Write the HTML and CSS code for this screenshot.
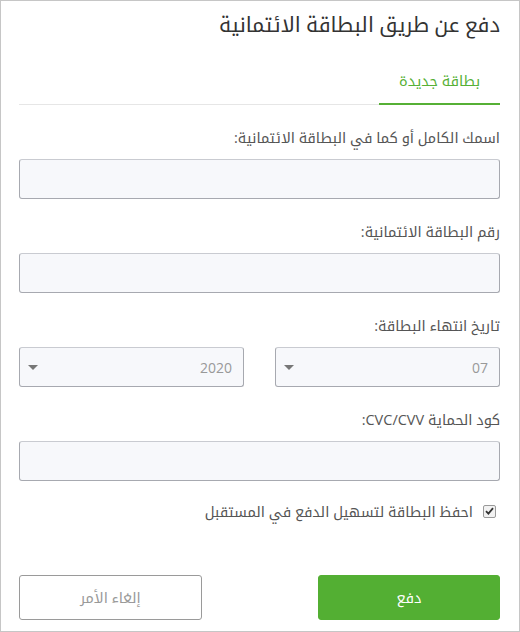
FILE: index.html
```
<!DOCTYPE html>
<html lang="ar" dir="rtl">
<head>
<meta charset="utf-8">
<title>دفع عن طريق البطاقة الائتمانية</title>
<link rel="stylesheet" href="styles.css">
</head>
<body>
<div class="dialog">
  <h1 class="title">دفع عن طريق البطاقة الائتمانية</h1>
  <div class="tabs">
    <div class="tab active">بطاقة جديدة</div>
  </div>
  <form class="form">
    <div class="field">
      <label class="label">اسمك الكامل أو كما في البطاقة الائتمانية:</label>
      <div class="input"></div>
    </div>
    <div class="field">
      <label class="label">رقم البطاقة الائتمانية:</label>
      <div class="input"></div>
    </div>
    <div class="field">
      <label class="label">تاريخ انتهاء البطاقة:</label>
      <div class="selects">
        <div class="select"><span class="value">07</span><span class="arrow"></span></div>
        <div class="select"><span class="value">2020</span><span class="arrow"></span></div>
      </div>
    </div>
    <div class="field">
      <label class="label">كود الحماية CVC/CVV:</label>
      <div class="input"></div>
    </div>
    <div class="check-row">
      <span class="checkbox"><svg width="9" height="8" viewBox="0 0 9 8"><path d="M1 4.2 L3.4 6.6 L8 1.2" fill="none" stroke="#333" stroke-width="1.8"/></svg></span>
      <span class="check-label">احفظ البطاقة لتسهيل الدفع في المستقبل</span>
    </div>
    <div class="actions">
      <button type="button" class="btn btn-pay">دفع</button>
      <button type="button" class="btn btn-cancel">إلغاء الأمر</button>
    </div>
  </form>
</div>
</body>
</html>
```
FILE: styles.css
```
* { box-sizing: border-box; }
html, body { margin: 0; padding: 0; background: #fff; }
body {
  font-family: "Open Sans", "Noto Kufi Arabic", sans-serif;
  color: #333;
}
.dialog {
  width: 520px;
  height: 632px;
  border: 1px solid #c6c6c6;
  padding: 0 19px 0 18px;
}
.title {
  margin: 0;
  padding-top: 9px;
  font-size: 20.7px;
  line-height: 28px;
  font-weight: normal;
  color: #333;
}
.tabs {
  margin-top: 22px;
  display: flex;
  border-bottom: 1px solid #e6e6e6;
}
.tab {
  padding: 11px 20px 12px;
  line-height: 20px;
  font-size: 14.5px;
}
.tab.active {
  color: #56b035;
  border-bottom: 2px solid #56b035;
  margin-bottom: -1px;
}
.form { display: flex; flex-direction: column; }
.field { margin-top: 23px; display: flex; flex-direction: column; }
.label {
  font-size: 14.5px;
  line-height: 20px;
  color: #555;
  margin-bottom: 11px;
}
.input, .select {
  height: 40px;
  background: #f7f8fb;
  border: 1px solid #a7a9b0;
  border-top-color: #c9cbd1;
  border-radius: 3px;
}
.selects {
  display: flex;
  justify-content: space-between;
}
.select {
  width: 225px;
  display: flex;
  align-items: center;
  justify-content: space-between;
  padding: 0 11px 0 8px;
  font-size: 14px;
  color: #999;
}
.arrow {
  width: 0;
  height: 0;
  border-left: 5px solid transparent;
  border-right: 5px solid transparent;
  border-top: 5px solid #777;
}
.check-row {
  margin-top: 21px;
  display: flex;
  align-items: center;
  gap: 10px;
  padding-right: 4px;
  line-height: 20px;
}
.checkbox {
  width: 13px;
  height: 13px;
  border: 1px solid #999;
  border-radius: 2px;
  background: #f2f2f2;
  display: flex;
  align-items: center;
  justify-content: center;
  margin-top: -2px;
}
.check-label { font-size: 14.5px; color: #555; }
.actions {
  margin-top: 53px;
  display: flex;
  justify-content: space-between;
}
.btn {
  width: 182px;
  height: 45px;
  border-radius: 3px;
  font-family: inherit;
  font-size: 14.5px;
  cursor: pointer;
}
.btn-pay {
  background: #53af33;
  border: 1px solid #53af33;
  color: #fff;
}
.btn-cancel {
  width: 183px;
  background: #fff;
  border: 1px solid #9a9a9a;
  color: #999;
}
```
